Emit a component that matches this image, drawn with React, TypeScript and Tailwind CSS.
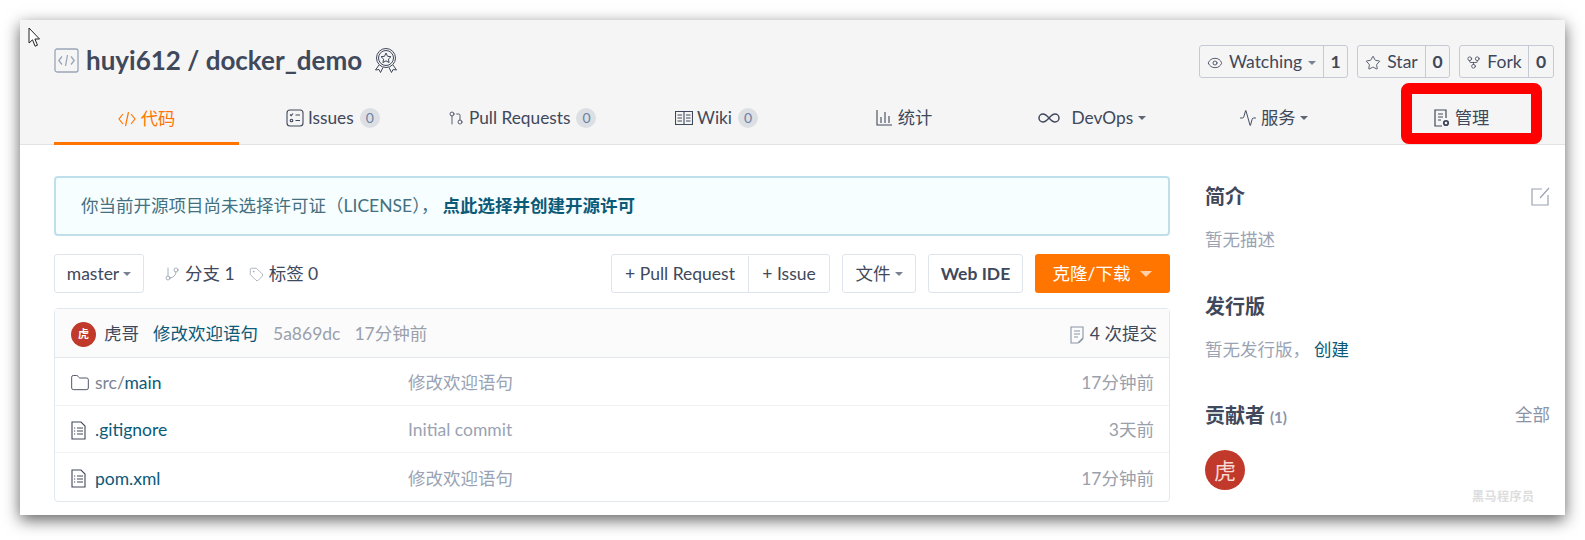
import { Eye, Star, GitFork, GitBranch, GitPullRequest, Tag, Folder, Infinity as InfinityIcon, Activity } from "lucide-react";

const FONT = "font-['Lato','Noto_Sans_CJK_SC',sans-serif]";

function Caret({ className = "border-t-[#5f6673]" }: { className?: string }) {
  return <span className={`inline-block w-0 h-0 border-x-[4px] border-x-transparent border-t-[4px] ${className}`} />;
}

function Cursor() {
  return (
    <svg width="13" height="21" viewBox="0 0 13 21" className="absolute left-[8px] top-[7px]">
      <path d="M1 1v15l3.500-3.200 2.600 6.400 2.400-1-2.600-6.200H11.500z" fill="#fff" stroke="#222" strokeWidth="1" />
    </svg>
  );
}

function RepoIcon() {
  return (
    <svg width="25" height="25" viewBox="0 0 25 25" fill="none" stroke="#9aa5b8" strokeWidth="1.300">
      <rect x="1" y="1" width="23" height="23" rx="2" />
      <path d="M8 8.500 4.800 12.500 8 16.500M17 8.500l3.200 4-3.200 4M13.500 7l-2 11" />
    </svg>
  );
}

function Badge() {
  return (
    <svg width="24" height="27" viewBox="0 0 24 27" fill="none" stroke="#40485b" strokeWidth="1">
      <circle cx="12" cy="11" r="9.500" />
      <circle cx="12" cy="11" r="7.500" />
      <path d="m12 6 1.500 3.300 3.500.4-2.600 2.400.7 3.500-3.100-1.800-3.100 1.800.7-3.500L7 9.700l3.500-.4z" />
      <path d="m5 18-3.500 5 3.500-.5 1.500 3 2.500-5M19 18l3.500 5-3.500-.5-1.500 3-2.500-5" />
    </svg>
  );
}

function CodeIcon() {
  return (
    <svg width="18" height="18" viewBox="0 0 18 18" fill="none" stroke="#ff7500" strokeWidth="1.200">
      <path d="M5 4 1 9l4 5M13 4l4 5-4 5M10.500 2l-3 14" />
    </svg>
  );
}

function IssueIcon() {
  return (
    <svg width="18" height="18" viewBox="0 0 18 18" fill="none" stroke="#40485b" strokeWidth="1.100">
      <rect x="1" y="1" width="16" height="16" rx="3" />
      <path d="m4 5.500 1.200 1.200L7 4.500M9.500 6H14M9.500 11.500H14" />
      <circle cx="5.500" cy="11.500" r="1.300" />
    </svg>
  );
}

function WikiIcon() {
  return (
    <svg width="18" height="14" viewBox="0 0 18 14" fill="none" stroke="#40485b" strokeWidth="1.100">
      <path d="M.5.500h17v13H.5zM9 .500v13" />
      <path d="M2.500 4H7M2.500 7H7M2.500 10H7M11 4h4.500M11 7h4.500M11 10h4.500" />
    </svg>
  );
}

function StatsIcon() {
  return (
    <svg width="16" height="17" viewBox="0 0 16 17" fill="none" stroke="#40485b" strokeWidth="1.100">
      <path d="M1 1v15h15M5 8v6M9 3v11M13 7v7" />
    </svg>
  );
}

function ManageIcon() {
  return (
    <svg width="16" height="18" viewBox="0 0 16 18" fill="none" stroke="#40485b" strokeWidth="1.200">
      <path d="M8 17H1V1h11v8" />
      <path d="M4 5h5M4 8h5M4 11h3" />
      <circle cx="12" cy="14" r="2.200" strokeWidth="1.800" />
    </svg>
  );
}

function FileIcon() {
  return (
    <svg width="15" height="19" viewBox="0 0 15 19" fill="none" stroke="#40485b" strokeWidth="1.100">
      <path d="M1 1h9l4 4v13H1z" />
      <path d="M6 7h6M6 10h6M6 13h6M3 7h1.200M3 10h1.200M3 13h1.200" />
    </svg>
  );
}

function CommitsIcon() {
  return (
    <svg width="14" height="18" viewBox="0 0 14 18" fill="none" stroke="#8b94a6" strokeWidth="1.100">
      <path d="M8 17H1V1h12v11z" />
      <path d="M4 5h6M4 8h6M4 11h4M9 16.500l4-4" />
    </svg>
  );
}

function EditIcon() {
  return (
    <svg width="19" height="19" viewBox="0 0 19 19" fill="none" stroke="#9aa3b3" strokeWidth="1.200">
      <path d="M11 2H1v16h16V8M9 11 18 1" />
    </svg>
  );
}

function Count({ n }: { n: string }) {
  return (
    <span className="ml-[6px] w-[20px] h-[20px] rounded-full bg-[#dcdfe4] text-[#6d7fa3] text-[14px] flex items-center justify-center">{n}</span>
  );
}

function Tab({ children, active }: { children: React.ReactNode; active?: boolean }) {
  return (
    <div className={`w-[185px] h-[50px] flex items-center justify-center text-[17.300px] whitespace-nowrap ${active ? "border-b-[3px] border-[#ff7500] text-[#ff7500]" : "text-[#40485b] pb-[5px]"}`}>
      {children}
    </div>
  );
}

function ActionBtn({ icon, label, caret, count, labelWidth, countWidth }: { icon: React.ReactNode; label: string; caret?: boolean; count: string; labelWidth: string; countWidth: string }) {
  return (
    <div className="h-[33px] flex items-center border border-[#c6cad6] rounded-[3px] text-[#40485b] text-[17.500px]">
      <div className={`h-full flex items-center justify-center gap-[6px] whitespace-nowrap pt-[2px] ${labelWidth}`}>
        {icon}
        <span>{label}</span>
        {caret && <Caret className="border-t-[#7a8190]" />}
      </div>
      <div className={`h-full border-l border-[#c6cad6] flex items-center justify-center font-bold pt-[2px] ${countWidth}`}>{count}</div>
    </div>
  );
}

const FILES = [
  { name: "main", prefix: "src/", msg: "修改欢迎语句", time: "17分钟前", folder: true },
  { name: ".gitignore", prefix: "", msg: "Initial commit", time: "3天前", folder: false },
  { name: "pom.xml", prefix: "", msg: "修改欢迎语句", time: "17分钟前", folder: false },
];

export default function App() {
  return (
    <div className={`h-[540px] w-[1585px] bg-white pt-[20px] pl-[20px] overflow-hidden ${FONT}`}>
      <div className="relative w-[1545px] h-[495px] bg-white shadow-[0_5px_15px_rgba(0,0,0,0.62)]">
        <Cursor />

        {/* Header */}
        <div className="h-[125px] bg-[#f5f5f5] border-b border-[#e3e3e3] pl-[34px] pr-[11px]">
          <div className="flex items-start justify-between h-[75px] pt-[25px]">
            <div className="flex items-center gap-[8px]">
              <RepoIcon />
              <span className="text-[26px] font-bold text-[#40485b] leading-[30px] ml-[-1px]">huyi612 / docker_demo</span>
              <span className="ml-[4px]"><Badge /></span>
            </div>
            <div className="flex gap-[9px]">
              <ActionBtn icon={<Eye size={16} strokeWidth={1.300} />} label="Watching" caret count="1" labelWidth="w-[123px]" countWidth="w-[24px]" />
              <ActionBtn icon={<Star size={16} strokeWidth={1.300} />} label="Star" count="0" labelWidth="w-[67px]" countWidth="w-[24px]" />
              <ActionBtn icon={<GitFork size={15} strokeWidth={1.300} />} label="Fork" count="0" labelWidth="w-[68px]" countWidth="w-[25px]" />
            </div>
          </div>
          <div className="flex gap-[3px]">
            <Tab active><CodeIcon /><span className="ml-[5px]">代码</span></Tab>
            <Tab><span className="mr-[4px] ml-[-3px] flex"><IssueIcon /></span><span>Issues</span><Count n="0" /></Tab>
            <Tab><GitPullRequest size={16} strokeWidth={1.300} /><span className="ml-[5px]">Pull Requests</span><Count n="0" /></Tab>
            <Tab><span className="ml-[13px] flex"><WikiIcon /></span><span className="ml-[4px]">Wiki</span><Count n="0" /></Tab>
            <Tab><span className="ml-[12px] flex"><StatsIcon /></span><span className="ml-[6px]">统计</span></Tab>
            <Tab><span className="ml-[12px] flex"><InfinityIcon size={24} strokeWidth={1.500} /></span><span className="ml-[10px] mr-[5px]">DevOps</span><Caret /></Tab>
            <Tab><Activity size={18} strokeWidth={1.300} /><span className="ml-[4px] mr-[5px]">服务</span><Caret /></Tab>
            <Tab><ManageIcon /><span className="ml-[5px]">管理</span></Tab>
          </div>
        </div>

        {/* Red annotation */}
        <div className="absolute left-[1381px] top-[63px] w-[141px] h-[61px] border-[11px] border-[#ff0000] rounded-[8px]" />

        {/* Body */}
        <div className="flex pl-[34px] pt-[31px] gap-[35px]">
          <div className="w-[1116px]">
            <div className="h-[60px] bg-[#f6feff] border-2 border-[#bfe0ea] rounded-[4px] flex items-center pl-[25px] text-[17.500px] text-[#45707f]">
              你当前开源项目尚未选择许可证（LICENSE），
              <span className="ml-[4px] font-bold text-[#0b5a78]">点此选择并创建开源许可</span>
            </div>

            <div className="mt-[18px] h-[39px] flex items-center text-[17.500px] text-[#40485b]">
              <div className="h-full w-[90px] border border-[#dfe3ec] rounded-[3px] flex items-center justify-center gap-[4px] pt-[1px]">
                master <Caret className="border-t-[#7a8190]" />
              </div>
              <div className="ml-[20px] flex items-center gap-[5px] pt-[1px]"><GitBranch size={16} strokeWidth={1.100} className="text-[#8b94a6]" />分支 1</div>
              <div className="ml-[14px] flex items-center gap-[5px] pt-[1px]"><Tag size={15} strokeWidth={1.100} className="text-[#8b94a6]" />标签 0</div>

              <div className="ml-auto flex h-full gap-[12px]">
                <div className="flex h-full border border-[#dfe3ec] rounded-[3px] pt-[1px]">
                  <div className="w-[137px] flex items-center justify-center border-r border-[#dfe3ec]">+ Pull Request</div>
                  <div className="w-[80px] flex items-center justify-center">+ Issue</div>
                </div>
                <div className="w-[74px] border border-[#dfe3ec] rounded-[3px] flex items-center justify-center gap-[4px] pt-[1px]">文件 <Caret className="border-t-[#7a8190]" /></div>
                <div className="w-[95px] border border-[#dfe3ec] rounded-[3px] flex items-center justify-center font-bold pt-[1px]">Web IDE</div>
                <div className="w-[135px] bg-[#ff7500] rounded-[3px] text-white flex items-center justify-center gap-[10px] pt-[1px]">克隆/下载 <Caret className="border-t-[#ffd0a8] border-x-[6px] border-t-[6px]" /></div>
              </div>
            </div>

            <div className="mt-[15px] border border-[#e3e7ee] rounded-[4px] text-[17.500px]">
              <div className="h-[49px] bg-[#fbfbfb] border-b border-[#e3e7ee] flex items-center pl-[16px] pr-[12px] pt-[3px]">
                <span className="w-[25px] h-[25px] rounded-full bg-[#c0392b] text-white text-[11px] font-bold flex items-center justify-center">虎</span>
                <span className="ml-[8px] text-[#40485b]">虎哥</span>
                <span className="ml-[14px] text-[#0b5a78]">修改欢迎语句</span>
                <span className="ml-[15px] text-[#9aa0ac]">5a869dc</span>
                <span className="ml-[14px] text-[#9aa0ac]">17分钟前</span>
                <span className="ml-auto flex items-center gap-[6px] text-[#40485b]"><CommitsIcon />4 次提交</span>
              </div>
              {FILES.map((f, i) => (
                <div key={f.name} className={`h-[47.700px] flex items-center pl-[16px] pr-[15px] pt-[3px] ${i < 2 ? "border-b border-[#f0f2f6]" : ""}`}>
                  <span className="w-[24px] flex items-center text-[#40485b]">
                    {f.folder ? <Folder size={20} strokeWidth={1.100} className="ml-[-1px]" /> : <FileIcon />}
                  </span>
                  <span className="w-[313px]">
                    <span className="text-[#7c8594]">{f.prefix}</span>
                    <span className="text-[#0b5a78]">{f.name}</span>
                  </span>
                  <span className="text-[#9aa3b3]">{f.msg}</span>
                  <span className="ml-auto text-[#9aa0ac]">{f.time}</span>
                </div>
              ))}
            </div>
          </div>

          {/* Sidebar */}
          <div className="w-[345px] relative">
            <div className="flex items-center justify-between h-[40px]">
              <span className="text-[20px] font-bold text-[#40485b]">简介</span>
              <EditIcon />
            </div>
            <div className="mt-[4px] h-[40px] flex items-center text-[17.500px] text-[#9aa3b3] pt-[1px]">暂无描述</div>
            <div className="mt-[26px] h-[40px] flex items-center text-[20px] font-bold text-[#40485b]">发行版</div>
            <div className="mt-[4px] h-[40px] flex items-center text-[17.500px] text-[#9aa3b3] pt-[1px]">暂无发行版，<span className="ml-[4px] text-[#0b5a78]">创建</span></div>
            <div className="mt-[25px] flex items-center justify-between h-[40px]">
              <span className="text-[20px] font-bold text-[#40485b]">贡献者 <span className="text-[15px] text-[#8b94a6]">(1)</span></span>
              <span className="text-[17.500px] text-[#8b94a6]">全部</span>
            </div>
            <div className="mt-[15px] w-[40px] h-[40px] rounded-full bg-[#c0392b] text-[#f6d8d4] text-[22px] flex items-center justify-center">虎</div>
            <div className="absolute left-[267px] top-[312px] text-[12px] font-bold text-[#dddddd] tracking-[0.5px]">黑马程序员</div>
          </div>
        </div>
      </div>
    </div>
  );
}
